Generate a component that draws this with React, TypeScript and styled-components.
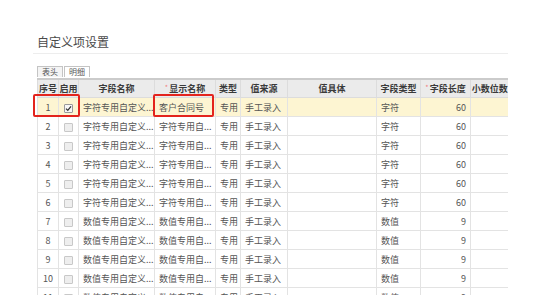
import React from 'react'
import styled, { createGlobalStyle, css } from 'styled-components'

interface Row {
  no: number
  checked: boolean
  fieldName: string
  displayName: string
  kind: string
  source: string
  detail: string
  fieldType: string
  length: number
}

const textRow = (no: number, displayName = '字符专用自...'): Row => ({
  no,
  checked: no === 1,
  fieldName: '字符专用自定义...',
  displayName,
  kind: '专用',
  source: '手工录入',
  detail: '',
  fieldType: '字符',
  length: 60
})

const numberRow = (no: number): Row => ({
  no,
  checked: false,
  fieldName: '数值专用自定义...',
  displayName: '数值专用自...',
  kind: '专用',
  source: '手工录入',
  detail: '',
  fieldType: '数值',
  length: 9
})

const rows: Row[] = [
  textRow(1, '客户合同号'),
  textRow(2),
  textRow(3),
  textRow(4),
  textRow(5),
  textRow(6),
  numberRow(7),
  numberRow(8),
  numberRow(9),
  numberRow(10),
  numberRow(11)
]

const columns: { title: string; width: number; required?: boolean }[] = [
  { title: '序号', width: 21 },
  { title: '启用', width: 20 },
  { title: '字段名称', width: 76 },
  { title: '显示名称', width: 61, required: true },
  { title: '类型', width: 25 },
  { title: '值来源', width: 47 },
  { title: '值具体', width: 89 },
  { title: '字段类型', width: 44 },
  { title: '字段长度', width: 50, required: true },
  { title: '小数位数', width: 38 }
]

export default function App() {
  return (
    <>
      <GlobalStyle />
      <StyledPage>
        <StyledTitle>自定义项设置</StyledTitle>
        <StyledTabs>
          <StyledTab active>表头</StyledTab>
          <StyledTab>明细</StyledTab>
        </StyledTabs>
        <StyledTableWrap>
          <StyledTable>
            <colgroup>
              {columns.map((c) => (
                <col key={c.title} style={{ width: c.width }} />
              ))}
            </colgroup>
            <thead>
              <tr>
                {columns.map((c) => (
                  <StyledTh key={c.title}>
                    {c.required && <StyledStar>*</StyledStar>}
                    {c.title}
                  </StyledTh>
                ))}
              </tr>
            </thead>
            <tbody>
              {rows.map((r) => (
                <StyledTr key={r.no} selected={r.no === 1}>
                  <StyledTd align='center'>{r.no}</StyledTd>
                  <StyledTd align='center'>
                    <StyledCheckbox checked={r.checked}>
                      {r.checked && (
                        <svg width='7' height='7' viewBox='0 0 7 7'>
                          <path d='M1 3.6 L2.8 5.4 L6 1.4' fill='none' stroke='#333' strokeWidth='1.3' />
                        </svg>
                      )}
                    </StyledCheckbox>
                  </StyledTd>
                  <StyledTd>{r.fieldName}</StyledTd>
                  <StyledTd>{r.displayName}</StyledTd>
                  <StyledTd align='center'>{r.kind}</StyledTd>
                  <StyledTd>{r.source}</StyledTd>
                  <StyledTd>{r.detail}</StyledTd>
                  <StyledTd>{r.fieldType}</StyledTd>
                  <StyledTd align='right'>{r.length}</StyledTd>
                  <StyledTd />
                </StyledTr>
              ))}
            </tbody>
          </StyledTable>
          <StyledMark left={-4} width={47} />
          <StyledMark left={116} width={61} />
        </StyledTableWrap>
      </StyledPage>
    </>
  )
}

const GlobalStyle = createGlobalStyle`
  html, body {
    margin: 0;
    padding: 0;
    background: #fff;
    overflow: hidden;
  }
  body {
    font-family: "Noto Sans CJK SC", "Liberation Sans", sans-serif;
    color: #444;
  }
`

const StyledPage = styled.div`
  width: 508px;
  height: 295px;
  padding: 33px 0 0 33px;
  box-sizing: border-box;
  overflow: hidden;
`

const StyledTitle = styled.h1`
  margin: 0;
  padding: 0 0 2px 4px;
  font-size: 12px;
  font-weight: normal;
  line-height: 18px;
  color: #4a4a4a;
  border-bottom: 1px solid #ededed;
`

const StyledTabs = styled.div`
  display: flex;
  gap: 1px;
  margin: 12px 0 1px 4px;
`

const StyledTab = styled.div<{ active?: boolean }>`
  width: 24px;
  height: 10px;
  line-height: 10px;
  font-size: 8px;
  text-align: center;
  color: #555;
  border: 1px solid #c4c4c4;
  border-bottom: none;
  background: ${({ active }) => (active ? '#f4f4f4' : '#fff')};
`

const StyledTableWrap = styled.div`
  position: relative;
  margin-left: 4px;
`

const StyledTable = styled.table`
  width: 471px;
  border-collapse: collapse;
  table-layout: fixed;
`

const StyledTh = styled.th`
  height: 17px;
  padding: 0;
  font-size: 9px;
  font-weight: bold;
  color: #3a3a3a;
  text-align: center;
  white-space: nowrap;
  overflow: hidden;
  background: #ebebeb;
  border-top: 2px solid #cbcbcb;
  border-left: 1px solid #dcdcdc;
  border-bottom: 1px solid #dcdcdc;
`

const StyledStar = styled.span`
  color: #f08080;
  font-weight: normal;
  margin-right: 1px;
  vertical-align: top;
  font-size: 7px;
`

const StyledTr = styled.tr<{ selected?: boolean }>`
  height: 19px;
  background: ${({ selected }) => (selected ? '#fdf5d2' : '#fff')};
`

const StyledTd = styled.td<{ align?: 'left' | 'center' | 'right' }>`
  padding: 0 4px;
  font-size: 9px;
  color: #555;
  white-space: nowrap;
  overflow: hidden;
  border: 1px solid #e3e3e3;

  ${({ align = 'left' }) => css`
    text-align: ${align};
  `}
`

const StyledCheckbox = styled.span<{ checked: boolean }>`
  display: inline-flex;
  align-items: center;
  justify-content: center;
  width: 7px;
  height: 7px;
  vertical-align: middle;
  border: 1px solid ${({ checked }) => (checked ? '#9a9a9a' : '#c8c8c8')};
  border-radius: 1px;
  background: ${({ checked }) => (checked ? '#f7f7f7' : '#eeeeee')};
`

const StyledMark = styled.div<{ left: number; width: number }>`
  position: absolute;
  top: 16px;
  left: ${({ left }) => left}px;
  width: ${({ width }) => width}px;
  height: 23px;
  box-sizing: border-box;
  border: 2px solid #e3241d;
  border-radius: 2px;
`
